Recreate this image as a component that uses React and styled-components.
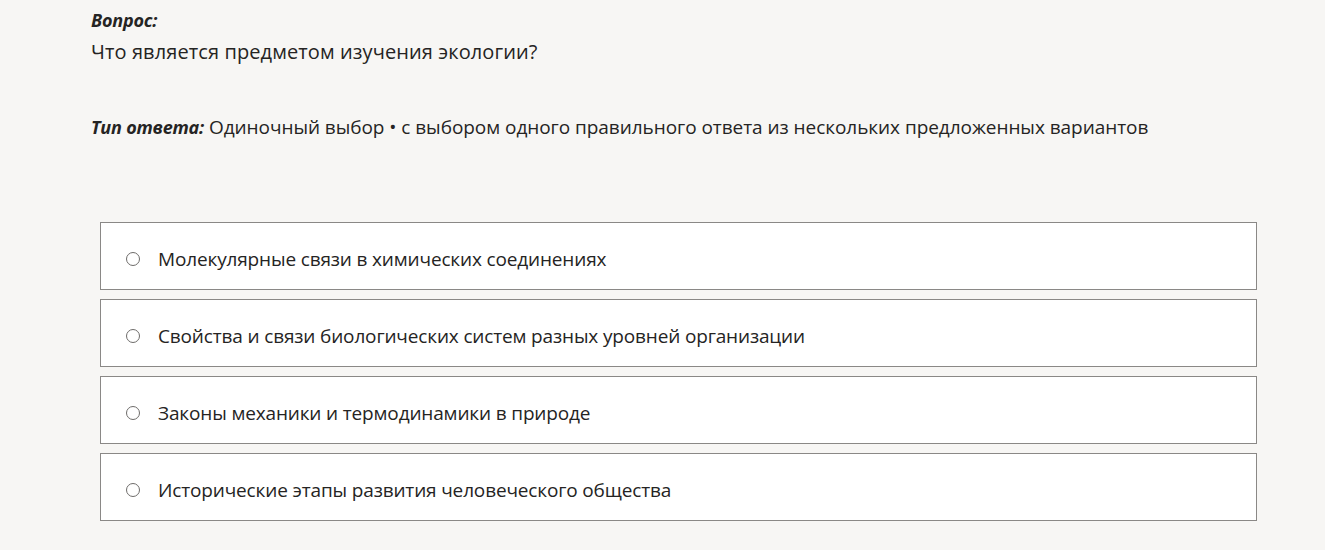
import styled, { createGlobalStyle } from 'styled-components';

const GlobalStyle = createGlobalStyle`
  html, body {
    margin: 0;
    padding: 0;
    background: #f7f6f4;
  }
  body {
    font-family: "Open Sans", "Noto Sans", sans-serif;
    color: #252423;
  }
`;

const options = [
  'Молекулярные связи в химических соединениях',
  'Свойства и связи биологических систем разных уровней организации',
  'Законы механики и термодинамики в природе',
  'Исторические этапы развития человеческого общества',
];

function App() {
  return (
    <Page>
      <GlobalStyle />
      <Header>
        <Label>Вопрос:</Label>
        <QuestionText>Что является предметом изучения экологии?</QuestionText>
      </Header>
      <AnswerType>
        <Label as="span">Тип ответа:</Label> Одиночный выбор • с выбором одного правильного ответа из нескольких
        предложенных вариантов
      </AnswerType>
      <OptionList>
        {options.map((text) => (
          <Option key={text}>
            <Radio />
            <OptionText>{text}</OptionText>
          </Option>
        ))}
      </OptionList>
    </Page>
  );
}

export default App;

const Page = styled.div`
  width: 1325px;
  height: 550px;
  padding: 8px 0 0 91px;
  box-sizing: border-box;
  overflow: hidden;
`;

const Header = styled.div`
  display: flex;
  flex-direction: column;
`;

const Label = styled.div`
  font-weight: 700;
  font-style: italic;
  font-size: 18px;
  line-height: 24px;
  letter-spacing: -0.2px;
`;

const QuestionText = styled.div`
  font-size: 20px;
  line-height: 30px;
  margin-top: 5px;
  letter-spacing: 0.1px;
`;

const AnswerType = styled.div`
  margin-top: 47px;
  font-size: 19px;
  line-height: 26px;
  letter-spacing: -0.05px;
`;

const OptionList = styled.div`
  display: flex;
  flex-direction: column;
  gap: 9px;
  margin: 82px 0 0 9px;
  width: 1157px;
`;

const Option = styled.label`
  display: flex;
  align-items: center;
  gap: 18px;
  height: 68px;
  box-sizing: border-box;
  padding: 6px 0 0 25px;
  background: #ffffff;
  border: 1px solid #8a8886;
`;

const Radio = styled.span`
  width: 14px;
  height: 14px;
  border-radius: 50%;
  border: 1px solid #6e6c6a;
  box-sizing: border-box;
  flex-shrink: 0;
`;

const OptionText = styled.span`
  font-size: 19px;
  letter-spacing: -0.15px;
`;
